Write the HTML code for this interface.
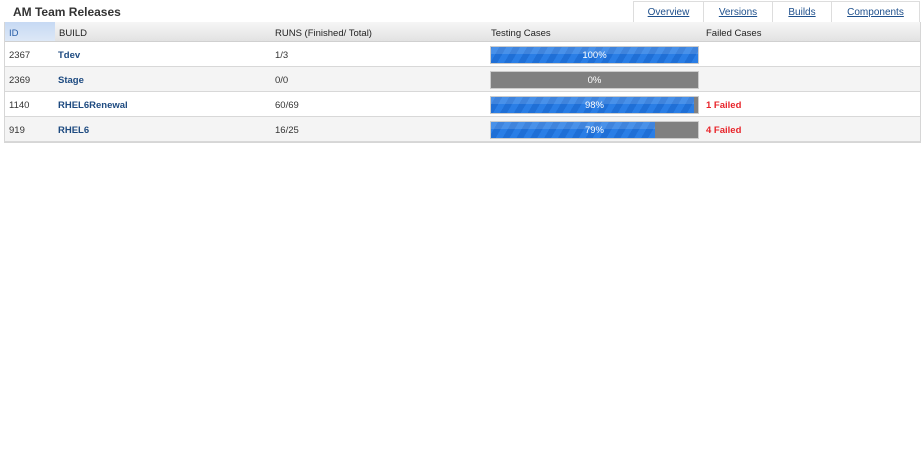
<!DOCTYPE html>
<html><head><style>
body{margin:0;background:#fff;font-family:"Liberation Sans",Arial,sans-serif;width:922px;height:450px;position:relative;overflow:hidden}
.t{position:absolute;left:13px;top:5px;font-size:12px;font-weight:bold;color:#333}
.tabs{position:absolute;left:633px;top:1px;height:21px;display:flex;border:1px solid #ddd;border-bottom:none}
.tabs a{display:block;font-size:10px;color:#1d4f8c;text-decoration:underline;text-align:center;line-height:21px;border-left:1px solid #ddd}
.tabs a:first-child{border-left:none}
.tbl{position:absolute;left:4px;top:22px;width:915px;border:1px solid #d6d6d6;border-top:none}
.hd{height:19px;background:linear-gradient(#f6f6f6,#e2e2e2);border-bottom:1px solid #d0d0d0;position:relative;font-size:9.5px;color:#222}
.hd span{position:absolute;top:6px}
.r span{position:absolute;top:8px}
.idh{position:absolute;left:0;top:0;width:50px;height:19px;background:linear-gradient(#c6d9f3,#dde8f7)}
.r{height:24px;border-bottom:1px solid #d8d8d8;position:relative;font-size:9.5px;color:#333}
.b{font-weight:bold;color:#1d4a80}
.bar{position:absolute;left:485px;top:4px;width:207px;height:16px;background:#808080;border:1px solid #ccc;overflow:hidden}
.fill{position:absolute;left:0;top:0;height:16px;background:repeating-linear-gradient(-60deg,#2a7ee6 0 6px,#1f6fd6 6px 12px)}
.fill:after{content:"";position:absolute;left:0;top:0;right:0;height:7px;background:rgba(255,255,255,.15)}
.pct{position:absolute;left:0;width:100%;text-align:center;color:#fff;font-size:9.5px;top:3px}
.f{color:#e8242a;font-weight:bold;left:701px}
</style></head><body>
<div class="t">AM Team Releases</div>
<div class="tabs"><a style="width:69px">Overview</a><a style="width:68px">Versions</a><a style="width:58px">Builds</a><a style="width:87px">Components</a></div>
<div class="tbl">
<div class="hd"><div class="idh"></div><span style="left:4px;color:#2a5fa8">ID</span><span style="left:54px">BUILD</span><span style="left:270px">RUNS (Finished/ Total)</span><span style="left:486px">Testing Cases</span><span style="left:701px">Failed Cases</span></div>
<div>
<div class="r" style="background:#fff"><span style="left:4px">2367</span><span class="b" style="left:53px">Tdev</span><span style="left:270px">1/3</span><div class="bar"><div class="fill" style="width:100%"></div><div class="pct">100%</div></div></div>
<div class="r" style="background:#f4f4f4"><span style="left:4px">2369</span><span class="b" style="left:53px">Stage</span><span style="left:270px">0/0</span><div class="bar"><div class="pct">0%</div></div></div>
<div class="r" style="background:#fff"><span style="left:4px">1140</span><span class="b" style="left:53px">RHEL6Renewal</span><span style="left:270px">60/69</span><div class="bar"><div class="fill" style="width:98%"></div><div class="pct">98%</div></div><span class="f">1 Failed</span></div>
<div class="r" style="background:#f4f4f4"><span style="left:4px">919</span><span class="b" style="left:53px">RHEL6</span><span style="left:270px">16/25</span><div class="bar"><div class="fill" style="width:79%"></div><div class="pct">79%</div></div><span class="f">4 Failed</span></div>
</div></div>
</body></html>
